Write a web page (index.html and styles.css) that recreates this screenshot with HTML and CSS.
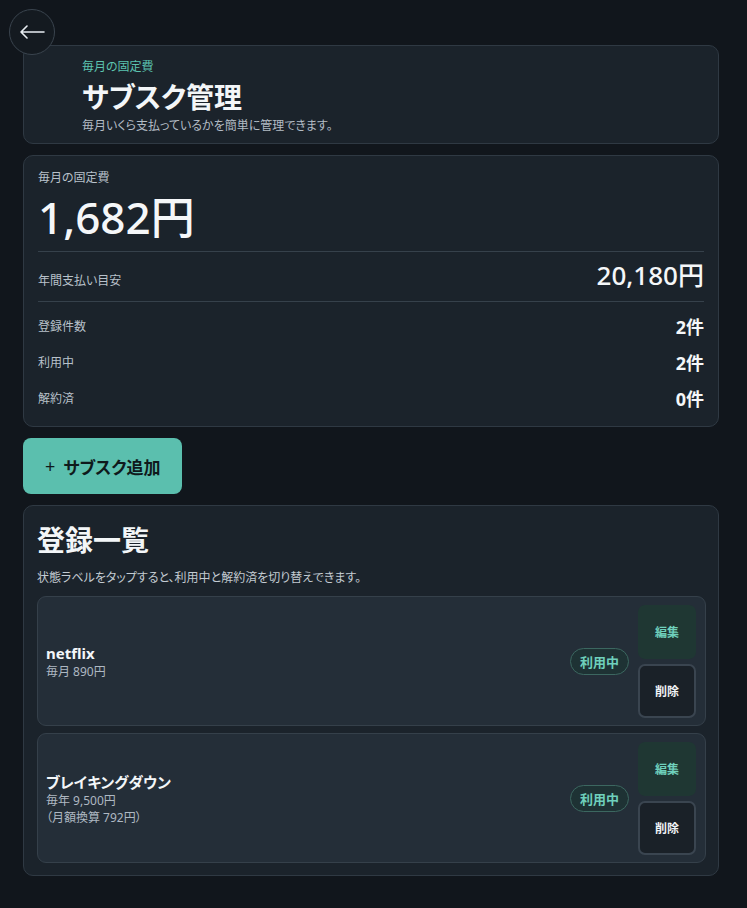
FILE: index.html
```html
<!DOCTYPE html>
<html lang="ja">
<head>
    <meta charset="UTF-8">
    <title>サブスク管理</title>
    <link rel="stylesheet" href="styles.css">
</head>
<body>
    <button class="back-btn" aria-label="戻る">
        <svg width="26" height="14" viewBox="0 0 26 14">
            <path d="M25 7H2M8 1L2 7l6 6" fill="none" stroke="#e8edf2" stroke-width="1.6" stroke-linecap="round" stroke-linejoin="round"/>
        </svg>
    </button>

    <div class="page">
        <header class="card header-card">
            <div class="eyebrow">毎月の固定費</div>
            <h1 class="page-title">サブスク管理</h1>
            <p class="page-sub">毎月いくら支払っているかを簡単に管理できます。</p>
        </header>

        <section class="card summary-card">
            <div class="summary-label">毎月の固定費</div>
            <div class="summary-total">1,682円</div>
            <div class="annual-row">
                <span class="stat-label">年間支払い目安</span>
                <span class="annual-value">20,180円</span>
            </div>
            <div class="stat-list">
                <div class="stat-row">
                    <span class="stat-label">登録件数</span>
                    <span class="stat-value">2件</span>
                </div>
                <div class="stat-row">
                    <span class="stat-label">利用中</span>
                    <span class="stat-value">2件</span>
                </div>
                <div class="stat-row">
                    <span class="stat-label">解約済</span>
                    <span class="stat-value">0件</span>
                </div>
            </div>
        </section>

        <div class="actions">
            <button class="add-btn"><span class="plus">+</span>サブスク追加</button>
        </div>

        <section class="card list-card">
            <h2 class="list-title">登録一覧</h2>
            <p class="list-sub">状態ラベルをタップすると、利用中と解約済を切り替えできます。</p>

            <div class="sub-list">
                <div class="sub-item">
                    <div class="sub-info">
                        <div class="sub-name">netflix</div>
                        <div class="sub-price">毎月 890円</div>
                    </div>
                    <span class="status">利用中</span>
                    <div class="item-btns">
                        <button class="edit-btn">編集</button>
                        <button class="delete-btn">削除</button>
                    </div>
                </div>

                <div class="sub-item">
                    <div class="sub-info">
                        <div class="sub-name">ブレイキングダウン</div>
                        <div class="sub-price">毎年 9,500円</div>
                        <div class="sub-price">（月額換算 792円）</div>
                    </div>
                    <span class="status">利用中</span>
                    <div class="item-btns">
                        <button class="edit-btn">編集</button>
                        <button class="delete-btn">削除</button>
                    </div>
                </div>
            </div>
        </section>
    </div>
</body>
</html>
```

FILE: styles.css
```css
* {
    margin: 0;
    padding: 0;
    box-sizing: border-box;
}

body {
    font-family: "Noto Sans", "Noto Sans CJK JP", sans-serif;
    font-feature-settings: "palt";
    background-color: #11161c;
    color: #eef2f5;
    min-height: 100vh;
}

button {
    font-family: inherit;
    font-feature-settings: "palt";
    cursor: pointer;
}

.back-btn {
    position: absolute;
    top: 9px;
    left: 9px;
    width: 46px;
    height: 46px;
    border-radius: 50%;
    border: 1px solid #3a444e;
    background-color: #141a20;
    display: flex;
    align-items: center;
    justify-content: center;
    z-index: 2;
}

.page {
    padding: 45px 28px 32px 23px;
    display: flex;
    flex-direction: column;
    gap: 11px;
}

.card {
    background-color: #1b232b;
    border: 1px solid #2f3943;
    border-radius: 10px;
}

.header-card {
    padding: 11px 14px 8px 58px;
}

.eyebrow {
    color: #5cc4b0;
    font-size: 12px;
    line-height: 20px;
}

.page-title {
    font-size: 28px;
    font-weight: 700;
    line-height: 40px;
    color: #f3f6f8;
}

.page-sub {
    font-size: 12px;
    line-height: 18px;
    color: #b3bcc5;
}

.summary-card {
    padding: 13px 14px 10px;
}

.summary-label {
    font-size: 12px;
    line-height: 18px;
    color: #b8c1ca;
}

.summary-total {
    font-size: 44px;
    font-weight: 500;
    line-height: 60px;
    color: #f5f7f9;
    padding-bottom: 4px;
    border-bottom: 1px solid #36414b;
}

.annual-row {
    display: flex;
    justify-content: space-between;
    align-items: baseline;
    padding: 8px 0 10px;
    border-bottom: 1px solid #36414b;
}

.annual-value {
    font-size: 26px;
    font-weight: 500;
    line-height: 31px;
    color: #f5f7f9;
}

.stat-list {
    padding-top: 6px;
}

.stat-row {
    display: flex;
    justify-content: space-between;
    align-items: center;
    height: 36px;
}

.stat-label {
    font-size: 12px;
    color: #b8c1ca;
}

.stat-value {
    font-size: 18px;
    font-weight: 700;
    color: #f5f7f9;
}

.actions {
    display: flex;
}

.add-btn {
    height: 56px;
    padding: 0 22px;
    border: none;
    border-radius: 8px;
    background-color: #5bbfae;
    color: #0f1a1c;
    font-size: 17px;
    font-weight: 700;
    display: flex;
    align-items: center;
    gap: 8px;
}

.add-btn .plus {
    font-weight: 400;
    font-size: 18px;
}

.list-card {
    padding: 14px 12px 12px 13px;
}

.list-title {
    font-size: 28px;
    font-weight: 700;
    line-height: 40px;
    color: #f3f6f8;
}

.list-sub {
    font-size: 12px;
    line-height: 18px;
    color: #c3cbd2;
    margin-top: 9px;
}

.sub-list {
    display: flex;
    flex-direction: column;
    gap: 7px;
    margin-top: 9px;
}

.sub-item {
    display: flex;
    align-items: center;
    background-color: #242e38;
    border: 1px solid #35404a;
    border-radius: 9px;
    padding: 8px 9px 7px 8px;
}

.sub-info {
    flex-grow: 1;
}

.sub-name {
    font-size: 15px;
    font-weight: 700;
    line-height: 20px;
    color: #f3f6f8;
}

.sub-price {
    font-size: 12px;
    line-height: 17px;
    color: #aeb8c2;
}

.status {
    height: 27px;
    padding: 0 9px;
    border: 1px solid #3c6760;
    border-radius: 14px;
    background-color: #1e3234;
    color: #6fd0bc;
    font-size: 13px;
    font-weight: 700;
    display: flex;
    align-items: center;
    margin-right: 9px;
}

.item-btns {
    display: flex;
    flex-direction: column;
    gap: 5px;
}

.edit-btn,
.delete-btn {
    width: 58px;
    height: 54px;
    border-radius: 7px;
    font-size: 12px;
    font-weight: 700;
}

.edit-btn {
    border: none;
    background-color: #1f3733;
    color: #6fd0bc;
}

.delete-btn {
    border: 2px solid #3a4550;
    background-color: #1a2128;
    color: #f0f3f6;
}
```
